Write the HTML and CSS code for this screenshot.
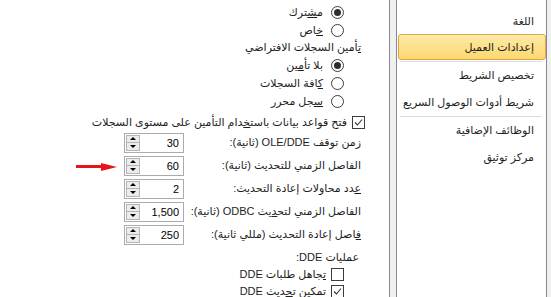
FILE: index.html
```html
<!DOCTYPE html>
<html lang="ar" dir="rtl">
<head>
    <meta charset="UTF-8">
    <title>خيارات Excel - إعدادات العميل</title>
    <link rel="stylesheet" href="styles.css">
</head>
<body>
<nav class="sidebar">
    <div class="nav-item">اللغة</div>
    <div class="nav-item active">إعدادات العميل</div>
    <div class="nav-sep"></div>
    <div class="nav-item">تخصيص الشريط</div>
    <div class="nav-item">شريط أدوات الوصول السريع</div>
    <div class="nav-sep"></div>
    <div class="nav-item">الوظائف الإضافية</div>
    <div class="nav-item">مركز توثيق</div>
</nav>

<main class="content">
    <div class="option radio-row">
        <span class="radio checked"></span>
        <span>م<u>ش</u>ترك</span>
    </div>
    <div class="option radio-row">
        <span class="radio"></span>
        <span><u>خ</u>اص</span>
    </div>

    <div class="group-title"><u>ت</u>أمين السجلات الافتراضي</div>
    <div class="option radio-row">
        <span class="radio checked"></span>
        <span>بلا تأ<u>م</u>ين</span>
    </div>
    <div class="option radio-row">
        <span class="radio"></span>
        <span><u>ك</u>افة السجلات</span>
    </div>
    <div class="option radio-row">
        <span class="radio"></span>
        <span><u>س</u>جل محرر</span>
    </div>

    <div class="option check-row main-check">
        <span class="checkbox checked">
            <svg viewBox="0 0 11 11" width="11" height="11"><polyline points="2,5.5 4.5,8 9,2.5" fill="none" stroke="#333" stroke-width="1.1"/></svg>
        </span>
        <span>فتح قواعد بيانات باست<u>خ</u>دام التأمين على مستوى السجلات</span>
    </div>

    <div class="field">
        <label>زمن توقف OLE/DDE (ثانية):</label>
        <div class="spin"><span class="spin-value">30</span><span class="spin-btns"><i class="up"></i><i class="down"></i></span></div>
    </div>
    <div class="field">
        <label>الفاصل الزمني للتحديث (ثانية):</label>
        <div class="spin"><span class="spin-value">60</span><span class="spin-btns"><i class="up"></i><i class="down"></i></span></div>
    </div>
    <div class="field">
        <label><u>ع</u>دد محاولات إعادة التحديث:</label>
        <div class="spin"><span class="spin-value">2</span><span class="spin-btns"><i class="up"></i><i class="down"></i></span></div>
    </div>
    <div class="field">
        <label>الفاصل الزمني لتح<u>د</u>يث ODBC (ثانية):</label>
        <div class="spin"><span class="spin-value">1,500</span><span class="spin-btns"><i class="up"></i><i class="down"></i></span></div>
    </div>
    <div class="field">
        <label><u>ف</u>اصل إعادة التحديث (مللي ثانية):</label>
        <div class="spin"><span class="spin-value">250</span><span class="spin-btns"><i class="up"></i><i class="down"></i></span></div>
    </div>

    <div class="group-title dde-title">عمليات DDE:</div>
    <div class="option check-row">
        <span class="checkbox"></span>
        <span><u>ت</u>جاهل طلبات DDE</span>
    </div>
    <div class="option check-row">
        <span class="checkbox checked">
            <svg viewBox="0 0 11 11" width="11" height="11"><polyline points="2,5.5 4.5,8 9,2.5" fill="none" stroke="#333" stroke-width="1.1"/></svg>
        </span>
        <span>تمكين ت<u>ح</u>ديث DDE</span>
    </div>

    <!-- red pointer added to the screenshot -->
    <svg class="pointer" width="42" height="10" viewBox="0 0 42 10">
        <rect x="0" y="3" width="28" height="3" fill="#e8141c"/>
        <polygon points="25,1 41,5 25,9" fill="#e8141c"/>
    </svg>
</main>
</body>
</html>
```

FILE: styles.css
```css
:root {
    --frame-bg: #f0f0f0;
    --frame-line: #878a90;
    --text: #1e1e1e;
    --ctrl-border: #3c3c3c;
}

* {
    margin: 0;
    padding: 0;
    box-sizing: border-box;
}

html, body {
    height: 100%;
}

body {
    display: flex;
    gap: 6px;
    padding-right: 4px;
    background: var(--frame-bg);
    font-family: "Liberation Sans", "DejaVu Sans", sans-serif;
    font-size: 11px;
    color: var(--text);
    overflow: hidden;
}

u {
    text-decoration: underline;
    text-underline-offset: 1px;
}

/* left-hand (right in RTL) category list */
.sidebar {
    width: 151px;
    flex-shrink: 0;
    background: #fff;
    border-left: 1px solid var(--frame-line);
    border-right: 1px solid var(--frame-line);
    padding-top: 8px;
}

.nav-item {
    height: 27px;
    line-height: 27px;
    padding-right: 12px;
    white-space: nowrap;
}

.nav-item.active {
    height: 26px;
    line-height: 24px;
    margin: -1px 0 1px 1px;
    padding-right: 11px;
    background: linear-gradient(#fdeaa9, #fcd86f);
    border: 1px solid #dea546;
    border-radius: 3px;
}

.nav-sep {
    height: 1px;
    margin: 0 4px 0 3px;
    background: #dcdee3;
}

/* options pane */
.content {
    flex: 1;
    position: relative;
    background: #fff;
    border-right: 1px solid var(--frame-line);
    padding: 3px 27px 0 0;
}

.option {
    display: flex;
    align-items: center;
    gap: 8px;
    white-space: nowrap;
}

.radio-row {
    height: 18px;
    padding-right: 18px;
}

.group-title {
    height: 17px;
    line-height: 17px;
    margin-right: 1px;
}

.radio {
    width: 13px;
    height: 13px;
    border: 1px solid var(--ctrl-border);
    border-radius: 50%;
    background: #fff;
    display: flex;
    align-items: center;
    justify-content: center;
    flex-shrink: 0;
}

.radio.checked::after {
    content: '';
    width: 7px;
    height: 7px;
    border-radius: 50%;
    background: #2e2e2e;
}

.check-row {
    height: 17px;
    gap: 3px;
    padding-right: 18px;
}

.main-check {
    margin-top: 4px;
    margin-right: -3px;
    padding-right: 0;
}

.checkbox {
    width: 13px;
    height: 13px;
    border: 1px solid var(--ctrl-border);
    background: #fff;
    display: flex;
    align-items: center;
    justify-content: center;
    flex-shrink: 0;
}

.check-row .checkbox {
    margin-left: 2px;
}

/* label + spinner rows */
.field {
    display: grid;
    grid-template-columns: 1fr 60px;
    align-items: center;
    height: 23px;
    padding-left: 124px;
    padding-right: 1px;
    white-space: nowrap;
}

.spin {
    height: 20px;
    border: 1px solid #a9abaf;
    display: flex;
    align-items: center;
    background: #fff;
}

.spin-value {
    flex: 1;
    padding-right: 4px;
    font-size: 11px;
    color: #000;
}

.spin-btns {
    display: flex;
    flex-direction: column;
    width: 14px;
    height: 16px;
    margin-left: 1px;
    border: 1px solid #b5b5b5;
    background: #ececec;
}

.spin-btns i {
    flex: 1;
    display: flex;
    align-items: center;
    justify-content: center;
}

.spin-btns i + i {
    border-top: 1px solid #b5b5b5;
}

.spin-btns i::after {
    content: '';
    border-left: 3px solid transparent;
    border-right: 3px solid transparent;
}

.spin-btns .up::after {
    border-bottom: 3px solid #000;
}

.spin-btns .down::after {
    border-top: 3px solid #000;
}

.dde-title {
    height: 18px;
    line-height: 18px;
    margin-top: 2px;
    margin-right: 3px;
}

.pointer {
    position: absolute;
    left: 76px;
    top: 162px;
}
```
